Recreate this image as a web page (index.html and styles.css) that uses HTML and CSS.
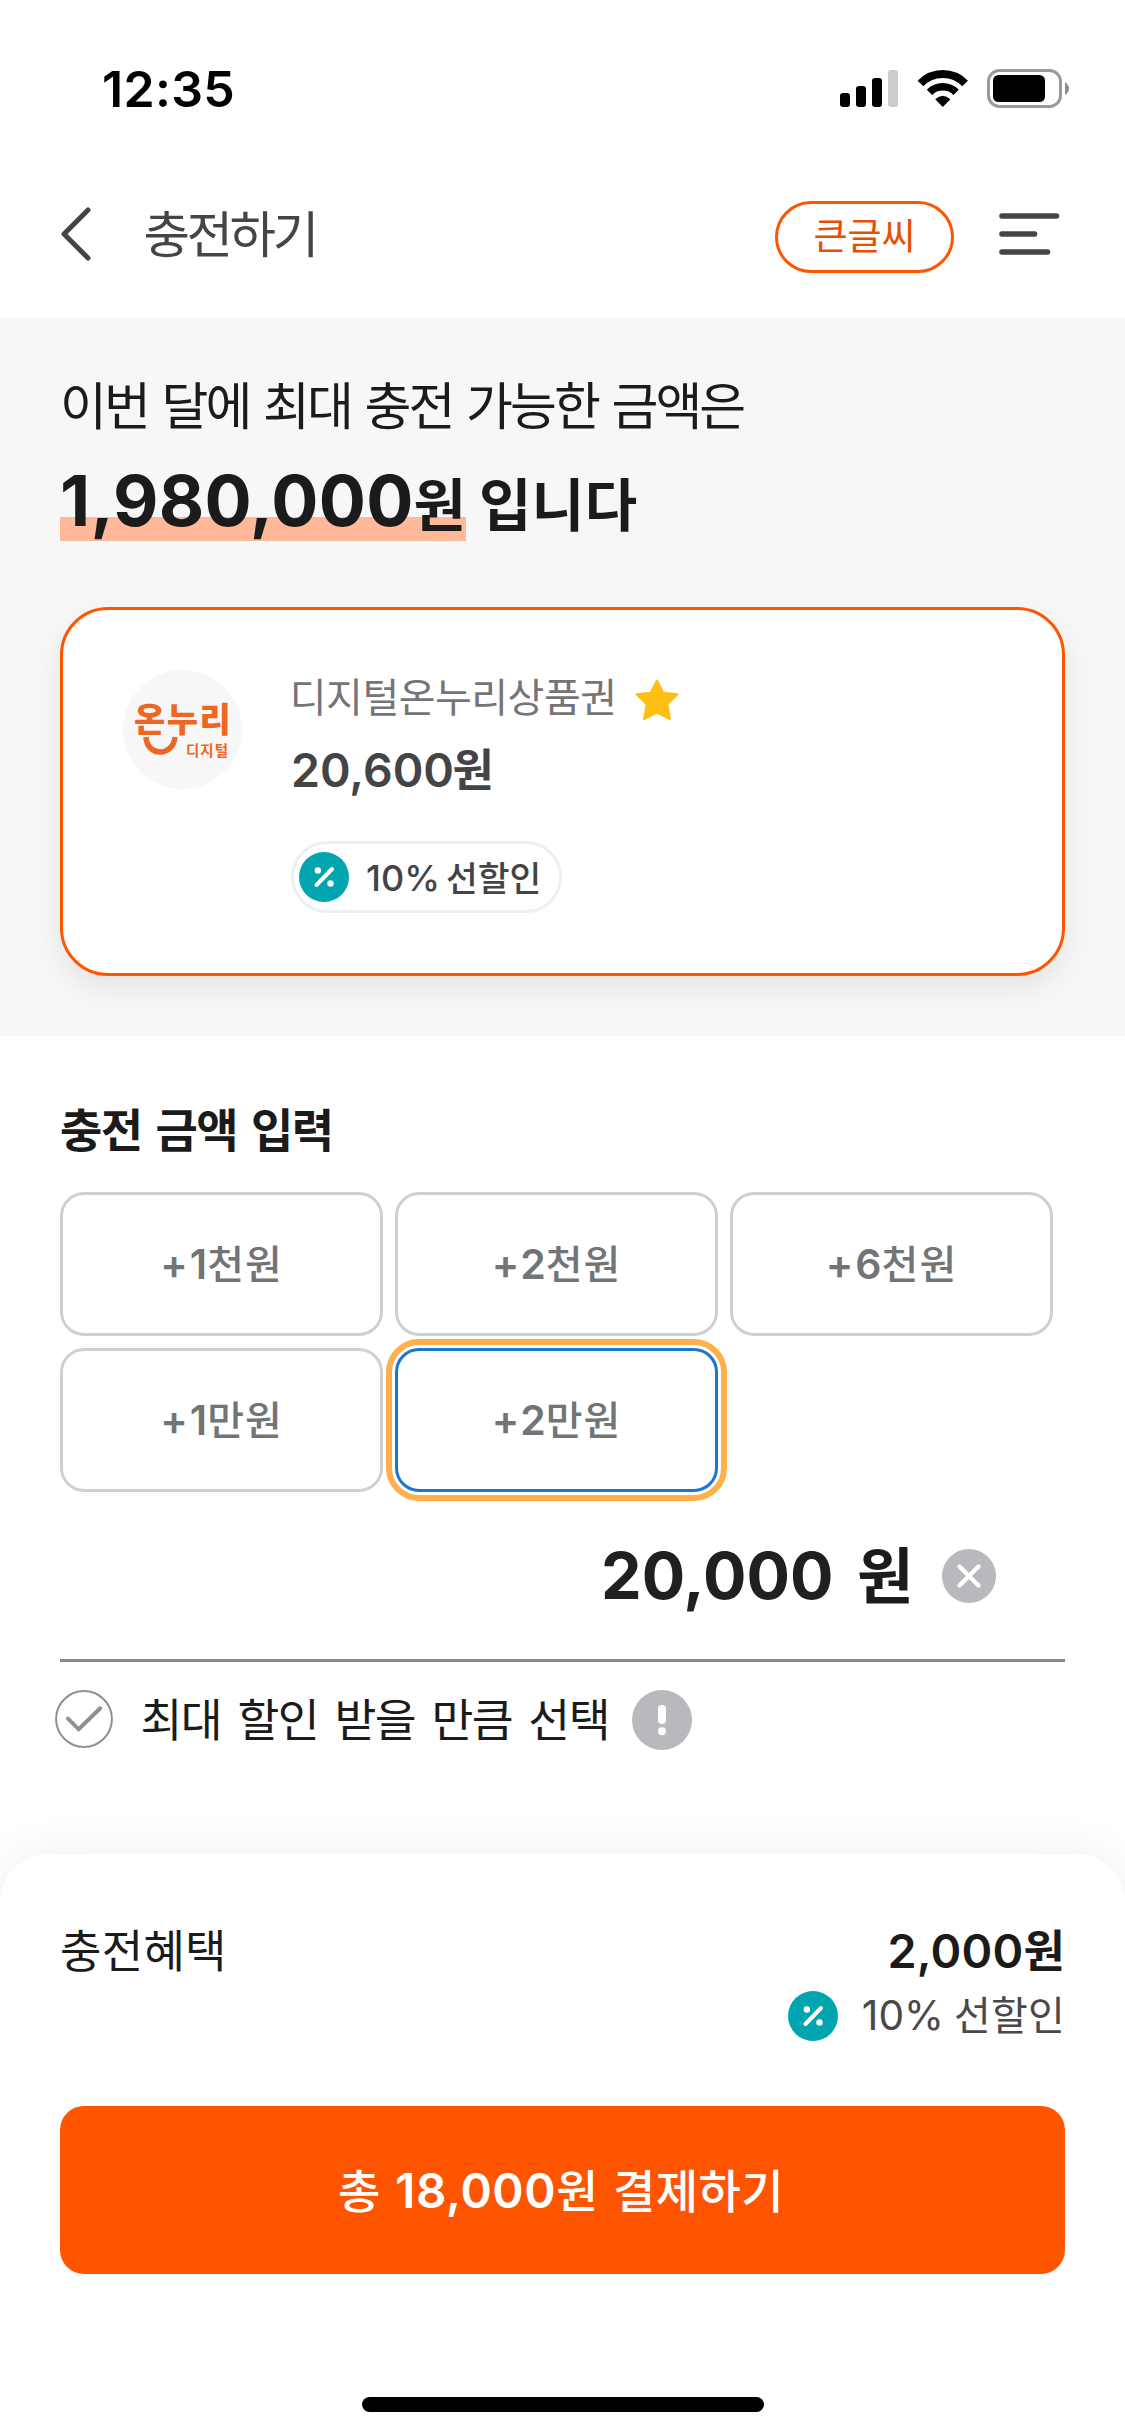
FILE: index.html
```
<!DOCTYPE html>
<html lang="ko">
<head>
<meta charset="utf-8">
<title>충전하기</title>
<link rel="stylesheet" href="styles.css">
</head>
<body>
<div class="status">
  <span class="num time">12:35</span>
  <div class="status-icons">
    <svg width="58" height="40" viewBox="0 0 58 40"><rect x="0" y="24" width="10" height="14" rx="3"/><rect x="16" y="17" width="10" height="21" rx="3"/><rect x="32" y="9" width="10" height="29" rx="3"/><rect x="48" y="1" width="10" height="37" rx="3" fill="#ccc"/></svg>
    <svg class="wifi" width="52" height="40" viewBox="0 0 52 40"><g fill="none" stroke="#000"><path d="M3.5 14.5A31 31 0 0 1 48.1 14.5" stroke-width="8"/><path d="M12.5 23.3A18.7 18.7 0 0 1 39.1 23.3" stroke-width="7.4"/></g><path d="M18.2 30.3Q25.8 23 33.4 30.3L25.8 38Z"/></svg>
    <svg class="battery" width="83" height="40" viewBox="0 0 83 40"><rect x="1.5" y="1.5" width="72" height="36" rx="11" fill="none" stroke="#999" stroke-width="3"/><rect x="6" y="6" width="52" height="27" rx="5.5"/><path d="M78 13Q82 16 82 19.500T78 26Z" fill="#8c8c8c"/></svg>
  </div>
</div>
<header class="header">
  <svg class="back" width="32" height="54" viewBox="0 0 32 54"><path d="M29 3L5 27L29 51"/></svg>
  <h1 class="page-title">충전하기</h1>
  <button class="big-font">큰글씨</button>
  <svg class="menu" width="62" height="44" viewBox="0 0 62 44"><path d="M3 4H57.500M3 22H35.500M3 40H48.500"/></svg>
</header>

<section class="summary">
  <p class="lead">이번 달에 최대 충전 가능한 금액은</p>
  <div class="limit"><span class="mark"><span class="num limit-num">1,980,000</span><span>원</span></span><span class="limit-end">입니다</span></div>
  <article class="card">
    <div class="logo">
      <span class="logo-name">온누리</span>
      <span class="logo-sub">디지털</span>
      <svg class="logo-smile" width="40" height="22" viewBox="0 0 40 22"><path d="M3 2C4 22 30 22 32 2"/></svg>
    </div>
    <div class="card-body">
      <div class="name-row"><span class="name">디지털온누리상품권</span>
        <svg class="star" width="44" height="42" viewBox="0 0 44 42"><path d="M22 1.500L28.300 13.700L42.500 15.300L32.300 25.300L35 40L22 33.500L9 40L11.700 25.300L1.500 15.300L15.700 13.700Z"/></svg>
      </div>
      <div class="row balance"><span class="num">20,600</span><span class="won">원</span></div>
      <div class="chip">
        <svg class="pct" width="50" height="50" viewBox="0 0 50 50"><circle cx="25" cy="25" r="25" fill="#00a5af"/><path d="M33 17L17.500 33" stroke="#fff" stroke-width="4" stroke-linecap="round"/><circle cx="18.800" cy="18.500" r="3.200" fill="#fff"/><circle cx="31.500" cy="31.500" r="3.200" fill="#fff"/></svg>
        <span class="row chip-text"><span class="num">10%</span><span class="chip-ko">선할인</span></span>
      </div>
    </div>
  </article>
</section>

<main class="charge">
  <h2 class="charge-title">충전 금액 입력</h2>
  <div class="grid">
    <button class="opt"><span class="num">+1</span><span>천원</span></button>
    <button class="opt"><span class="num">+2</span><span>천원</span></button>
    <button class="opt"><span class="num">+6</span><span>천원</span></button>
    <button class="opt"><span class="num">+1</span><span>만원</span></button>
    <button class="opt opt-on"><span class="num">+2</span><span>만원</span></button>
  </div>
  <div class="amount">
    <div class="row"><span class="num amount-num">20,000</span><span class="amount-won">원</span></div>
    <svg class="clear" width="54" height="54" viewBox="0 0 54 54"><circle cx="27" cy="27" r="27" fill="#b8b9bd"/><path d="M17.500 17.500L36.500 36.500M36.500 17.500L17.500 36.500" stroke="#fff" stroke-width="4.4" stroke-linecap="round"/></svg>
  </div>
  <div class="max">
    <svg width="58" height="58" viewBox="0 0 58 58"><g fill="none" stroke="#8f9093"><circle cx="29" cy="29" r="27.900" stroke-width="2"/><path d="M13 28.700L23.700 39.300L45.300 18.300" stroke-width="4" stroke-linecap="round"/></g></svg>
    <span class="max-text">최대 할인 받을 만큼 선택</span>
    <svg width="60" height="60" viewBox="0 0 60 60"><circle cx="30" cy="30" r="30" fill="#b8b9bd"/><path d="M30 19V30" stroke="#fff" stroke-width="8" stroke-linecap="round"/><circle cx="30" cy="41.300" r="4" fill="#fff"/></svg>
  </div>
</main>

<footer class="sheet">
  <div class="benefit"><span class="benefit-label">충전혜택</span><span class="row"><span class="num benefit-num">2,000</span><span class="benefit-won">원</span></span></div>
  <div class="discount">
    <svg class="pct" width="50" height="50" viewBox="0 0 50 50"><circle cx="25" cy="25" r="25" fill="#00a5af"/><path d="M33 17L17.500 33" stroke="#fff" stroke-width="4" stroke-linecap="round"/><circle cx="18.800" cy="18.500" r="3.200" fill="#fff"/><circle cx="31.500" cy="31.500" r="3.200" fill="#fff"/></svg>
    <span class="row discount-text"><span class="num">10%</span><span class="discount-ko">선할인</span></span>
  </div>
  <button class="pay"><span>총</span><span class="num pay-num">18,000</span><span class="pay-won">원</span><span class="pay-end">결제하기</span></button>
  <div class="home"></div>
</footer>
</body>
</html>
```
FILE: styles.css
```
* { box-sizing: border-box; margin: 0; padding: 0; }

body {
  width: 1125px;
  height: 2436px;
  overflow: hidden;
  background: #fff;
  color: #1b1b1b;
  font-family: "Noto Sans CJK KR", sans-serif;
  line-height: 1;
  white-space: nowrap;
}

svg { display: block; flex: none; }
button { font: inherit; color: inherit; background: none; border: 0; line-height: 1; }
.num { font-family: Inter, sans-serif; }
.row { display: flex; align-items: baseline; }

/* status bar */
.status { display: flex; justify-content: space-between; height: 201px; padding: 63.5px 55px 0 102px; color: #000; }
.time { font-size: 50px; font-weight: 600; letter-spacing: 0.3px; }
.status-icons { display: flex; padding-top: 5.5px; }
.wifi { margin-left: 19px; }
.battery { margin-left: 18px; }

/* header */
.header { display: flex; height: 117px; padding: 0 64px 0 59px; color: #444547; }
.back { margin-top: 6px; fill: none; stroke: #444547; stroke-width: 5; stroke-linecap: round; stroke-linejoin: round; }
.page-title { margin: 4.700px 0 0 52.500px; font-size: 50.5px; font-weight: 400; letter-spacing: -3.4px; }
.big-font { width: 179px; height: 72px; margin-left: auto; padding-bottom: 6px; border: 3px solid #ff5500; border-radius: 36px; color: #e84e00; font-size: 37px; }
.menu { margin: 11px 0 0 45px; fill: none; stroke: #444547; stroke-width: 5.6; stroke-linecap: round; }

/* limit and voucher card */
.summary { height: 718px; padding: 60px 60px 0; background: #f7f7f7; }
.lead { font-size: 51px; letter-spacing: -3px; word-spacing: 2.4px; }
.limit { display: flex; align-items: baseline; height: 70px; margin-top: 36.5px; font-size: 57px; font-weight: 700; }
.mark { display: flex; align-items: baseline; padding-bottom: 5.500px; background: linear-gradient(#ffb999, #ffb999) bottom / 100% 24px no-repeat; }
.limit-num { font-size: 70px; letter-spacing: 0.2px; }
.limit-end { margin-left: 13px; letter-spacing: 0.4px; }
.card { display: flex; height: 369px; margin-top: 71.5px; padding: 60px; border: 3px solid #ff5500; border-radius: 48px; background: #fff; box-shadow: 0 12px 30px rgba(0, 0, 0, 0.08); }
.logo { position: relative; width: 119px; height: 119px; border-radius: 50%; background: #f7f7f7; color: #ee6722; }
.logo-name { position: absolute; left: 11px; top: 31px; font-size: 34px; font-weight: 900; letter-spacing: 1.5px; }
.logo-sub { position: absolute; left: 63px; top: 73px; font-size: 14.5px; font-weight: 700; letter-spacing: 1px; }
.logo-smile { position: absolute; left: 20px; top: 65px; fill: none; stroke: #ee6722; stroke-width: 5.500; }
.card-body { margin-left: 49px; padding-top: 4.6px; }
.name-row { display: flex; height: 40px; }
.name { margin-left: -1.200px; color: #747577; font-size: 40px; letter-spacing: -0.5px; }
.star { margin: 4.4px 0 0 18.5px; fill: #ffbe14; stroke: #ffbe14; stroke-width: 2; stroke-linejoin: round; }
.balance { margin-top: 30px; color: #434446; font-size: 46.5px; font-weight: 600; }
.won { margin-left: -1.5px; font-size: 45px; }
.chip { display: flex; align-items: center; width: 271px; height: 72px; margin-top: 48px; padding-left: 5px; border: 3px solid #eeeff0; border-radius: 36px; }
.chip-text { margin-left: 17px; color: #434446; font-size: 36px; font-weight: 500; }
.chip-ko { margin-left: 6px; font-size: 34.5px; }

/* amount selection */
.charge { padding: 68px 60px 0; }
.charge-title { font-size: 46px; font-weight: 700; letter-spacing: -1.6px; word-spacing: 2.8px; }
.grid { display: grid; grid-template-columns: repeat(3, 323px); grid-auto-rows: 144px; gap: 12px; margin-top: 42px; }
.opt { display: flex; align-items: baseline; justify-content: center; padding-top: 46.6px; border: 3px solid #cfd1d1; border-radius: 24px; color: #737476; font-size: 40px; font-weight: 500; letter-spacing: 1px; }
.opt .num { margin-right: -2px; font-size: 41px; font-weight: 600; letter-spacing: 2px; }
.opt-on { border-color: #1976d2; outline: 6px solid #ffb04d; outline-offset: 3px; }
.amount { display: flex; justify-content: flex-end; height: 170px; padding: 50.4px 69px 0 0; border-bottom: 3px solid #868a90; font-weight: 700; }
.amount-num { font-size: 64.5px; color: #202020; }
.amount-won { margin-left: 23.5px; font-size: 61.5px; }
.clear { margin: 6.600px 0 0 28.500px; }
.max { display: flex; height: 60px; margin: 28px 0 0 -5px; }
.max-text { margin: 5px 23px 0 27.5px; font-size: 45.5px; letter-spacing: -1.5px; word-spacing: 5px; }

/* payment sheet */
.sheet { height: 582px; margin-top: 104px; padding: 72px 60px 0; border-radius: 48px 48px 0 0; background: #fff; box-shadow: 0 0 48px rgba(0, 0, 0, 0.07); }
.benefit { display: flex; justify-content: space-between; align-items: baseline; height: 48.5px; }
.benefit-label { font-size: 45px; letter-spacing: 0.3px; }
.benefit-num { font-size: 46.7px; font-weight: 600; letter-spacing: 0.2px; }
.benefit-won { font-size: 45px; font-weight: 600; }
.discount { display: flex; justify-content: flex-end; height: 50px; margin-top: 16.5px; color: #49494b; }
.discount-text { margin: 1.6px 0 0 24px; height: 43px; font-size: 40.700px; }
.discount-ko { margin-left: 10px; font-size: 40px; letter-spacing: 0.2px; }
.pay { display: flex; align-items: baseline; justify-content: center; width: 100%; height: 168px; margin-top: 65px; padding: 59px 3px 0 0; border-radius: 24px; background: #ff5500; color: #fff; font-size: 46px; font-weight: 500; }
.pay-num { margin-left: 15px; font-size: 47.5px; font-weight: 600; letter-spacing: 0.6px; }
.pay-won { font-size: 45.5px; }
.pay-end { margin-left: 15px; letter-spacing: 0.4px; }
.home { width: 402px; height: 15px; margin: 123px 0 0 302px; border-radius: 8px; background: #000; }
```
